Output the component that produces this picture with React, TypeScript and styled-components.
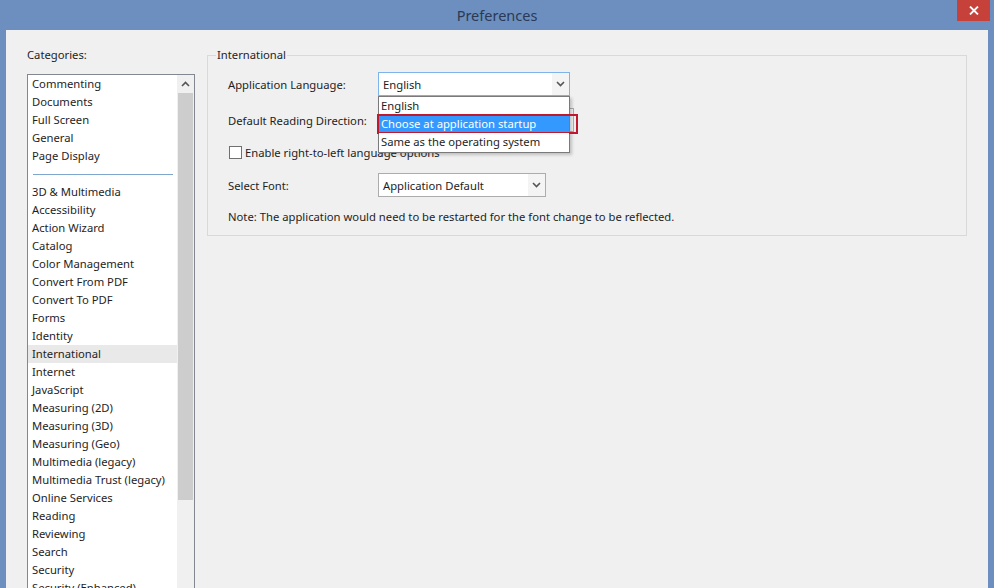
import React from 'react';
import styled, { createGlobalStyle } from 'styled-components';

const GlobalStyle = createGlobalStyle`
  html, body {
    margin: 0;
    padding: 0;
    background: #6d8fbf;
  }
  * {
    box-sizing: border-box;
  }
`;

const UI_FONT = `"Segoe UI", "Noto Sans", "Open Sans", sans-serif`;

const Window = styled.div`
  width: 994px;
  height: 588px;
  background: #6d8fbf;
  display: flex;
  flex-direction: column;
  overflow: hidden;
  font-family: ${UI_FONT};
  font-size: 11.25px;
  color: #1e1e1e;
`;

const TitleBar = styled.div`
  height: 30px;
  flex-shrink: 0;
  display: grid;
  grid-template-columns: 1fr auto 1fr;
  align-items: start;
`;

const Title = styled.div`
  grid-column: 2;
  font-size: 14.5px;
  line-height: 30px;
  color: #2a3a55;
`;

const CloseButton = styled.div`
  grid-column: 3;
  justify-self: end;
  width: 33px;
  height: 21px;
  margin-right: 4px;
  background: #c7413b;
  display: flex;
  align-items: center;
  justify-content: center;
`;

const Body = styled.div`
  flex: 1;
  margin: 0 6px;
  background: #f0f0f0;
  display: flex;
  align-items: flex-start;
  padding: 16px 0 0 21px;
  gap: 12px;
`;

const LeftColumn = styled.div`
  width: 168px;
  display: flex;
  flex-direction: column;
  gap: 10px;
`;

const Caption = styled.div`
  line-height: 18px;
`;

const ListBox = styled.div`
  height: 540px;
  border: 1px solid #828790;
  background: #fff;
  display: flex;
`;

const Items = styled.div`
  flex: 1;
  overflow: hidden;
  display: flex;
  flex-direction: column;
`;

const Item = styled.div<{ $selected?: boolean }>`
  height: 18px;
  line-height: 18px;
  padding-left: 4px;
  white-space: nowrap;
  background: ${({ $selected }) => ($selected ? '#e9e9e9' : 'transparent')};
  flex-shrink: 0;
`;

const Separator = styled.div`
  height: 18px;
  flex-shrink: 0;
  display: flex;
  align-items: center;
  padding: 0 4px 0 5px;

  &::after {
    content: '';
    flex: 1;
    height: 1px;
    background: #7fa6cc;
  }
`;

const ScrollBar = styled.div`
  width: 17px;
  background: #f0f0f0;
  display: flex;
  flex-direction: column;
  align-items: center;
`;

const ScrollArrow = styled.div`
  height: 18px;
  width: 17px;
  display: flex;
  align-items: center;
  justify-content: center;
  background: #f0f0f0;
`;

const ScrollThumb = styled.div`
  width: 15px;
  height: 407px;
  background: #cdcdcd;
`;

const GroupBox = styled.fieldset`
  width: 760px;
  margin: 0;
  margin-top: 1px;
  border: 1px solid #d9d9d9;
  padding: 0 10px 9px 8px;
`;

const Legend = styled.legend`
  padding: 0 1px;
  line-height: 16px;
`;

const Form = styled.div`
  padding-left: 12px;
  display: flex;
  flex-direction: column;
`;

const Row = styled.div<{ $top: number; $height: number }>`
  height: ${({ $height }) => $height}px;
  margin-top: ${({ $top }) => $top}px;
  display: flex;
  align-items: center;
`;

const Label = styled.div`
  width: 150px;
  white-space: nowrap;
`;

const ComboWrap = styled.div`
  position: relative;
`;

const Combo = styled.div<{ $width: number; $focused?: boolean }>`
  width: ${({ $width }) => $width}px;
  height: 24px;
  border: 1px solid ${({ $focused }) => ($focused ? '#7eb4ea' : '#acacac')};
  background: #fff;
  display: flex;
  align-items: stretch;
`;

const ComboText = styled.div`
  flex: 1;
  padding-left: 4px;
  display: flex;
  align-items: center;
  white-space: nowrap;
`;

const ComboButton = styled.div`
  width: 17px;
  background: #f4f4f4;
  display: flex;
  align-items: center;
  justify-content: center;
`;

const Dropdown = styled.div`
  position: absolute;
  top: 24px;
  left: 0;
  width: 192px;
  border: 1px solid #7a7a7a;
  background: #fff;
  box-shadow: 2px 2px 3px rgba(0, 0, 0, 0.2);
  z-index: 2;
  padding: 0 0 1px 0;
`;

const Option = styled.div<{ $active?: boolean }>`
  position: relative;
  height: 18px;
  line-height: 18px;
  padding-left: 2px;
  white-space: nowrap;
  background: ${({ $active }) => ($active ? '#3399ff' : '#fff')};
  color: ${({ $active }) => ($active ? '#fff' : '#1e1e1e')};
`;

const Marker = styled.span`
  position: absolute;
  left: -2px;
  top: -1px;
  right: -9px;
  bottom: -1px;
  border: 2.5px solid #c0182c;
  pointer-events: none;
`;

const CheckBox = styled.div`
  width: 13px;
  height: 13px;
  border: 1px solid #707070;
  background: #fff;
  margin: 0 3px 0 1px;
`;

const Note = styled.div`
  line-height: 18px;
  white-space: nowrap;
`;

const Chevron: React.FC<{ up?: boolean }> = ({ up }) => (
  <svg width="9" height="6" viewBox="0 0 9 6">
    <path
      d={up ? 'M1 5 L4.5 1.5 L8 5' : 'M1 1 L4.5 4.5 L8 1'}
      fill="none"
      stroke="#555"
      strokeWidth="1.6"
    />
  </svg>
);

const groupA = ['Commenting', 'Documents', 'Full Screen', 'General', 'Page Display'];
const groupB = [
  '3D & Multimedia',
  'Accessibility',
  'Action Wizard',
  'Catalog',
  'Color Management',
  'Convert From PDF',
  'Convert To PDF',
  'Forms',
  'Identity',
  'International',
  'Internet',
  'JavaScript',
  'Measuring (2D)',
  'Measuring (3D)',
  'Measuring (Geo)',
  'Multimedia (legacy)',
  'Multimedia Trust (legacy)',
  'Online Services',
  'Reading',
  'Reviewing',
  'Search',
  'Security',
  'Security (Enhanced)',
  'Signatures',
  'Spelling',
];

export default function App() {
  return (
    <>
      <GlobalStyle />
      <Window>
        <TitleBar>
          <Title>Preferences</Title>
          <CloseButton>
            <svg width="10" height="9" viewBox="0 0 10 9">
              <path d="M1 0.5 L9 8.5 M9 0.5 L1 8.5" stroke="#fff" strokeWidth="1.8" />
            </svg>
          </CloseButton>
        </TitleBar>
        <Body>
          <LeftColumn>
            <Caption>Categories:</Caption>
            <ListBox>
              <Items>
                {groupA.map((name) => (
                  <Item key={name}>{name}</Item>
                ))}
                <Separator />
                {groupB.map((name) => (
                  <Item key={name} $selected={name === 'International'}>
                    {name}
                  </Item>
                ))}
              </Items>
              <ScrollBar>
                <ScrollArrow>
                  <Chevron up />
                </ScrollArrow>
                <ScrollThumb />
              </ScrollBar>
            </ListBox>
          </LeftColumn>
          <GroupBox>
            <Legend>International</Legend>
            <Form>
              <Row $top={9} $height={24}>
                <Label>Application Language:</Label>
                <ComboWrap>
                  <Combo $width={192} $focused>
                    <ComboText>English</ComboText>
                    <ComboButton>
                      <Chevron />
                    </ComboButton>
                  </Combo>
                  <Dropdown>
                    <Option>English</Option>
                    <Option $active>
                      Choose at application startup
                      <Marker />
                    </Option>
                    <Option>Same as the operating system</Option>
                  </Dropdown>
                </ComboWrap>
              </Row>
              <Row $top={12} $height={24}>
                <Label>Default Reading Direction:</Label>
                <Combo $width={196}>
                  <ComboText>Infer from document</ComboText>
                  <ComboButton>
                    <Chevron />
                  </ComboButton>
                </Combo>
              </Row>
              <Row $top={12} $height={16}>
                <CheckBox />
                <span>Enable right-to-left language options</span>
              </Row>
              <Row $top={13} $height={24}>
                <Label>Select Font:</Label>
                <Combo $width={168}>
                  <ComboText>Application Default</ComboText>
                  <ComboButton>
                    <Chevron />
                  </ComboButton>
                </Combo>
              </Row>
              <Row $top={11} $height={18}>
                <Note>
                  Note: The application would need to be restarted for the font change to be reflected.
                </Note>
              </Row>
            </Form>
          </GroupBox>
        </Body>
      </Window>
    </>
  );
}
